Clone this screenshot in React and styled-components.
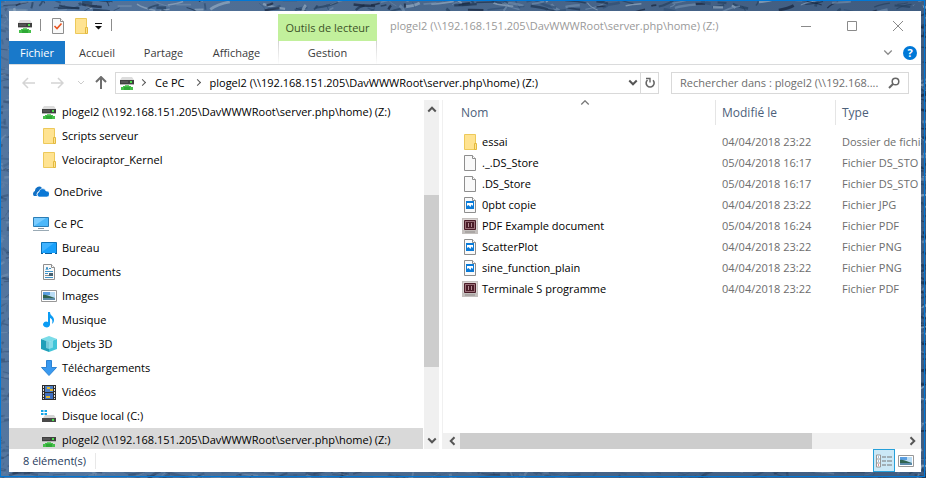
import React from "react";
import styled, { createGlobalStyle } from "styled-components";

const GlobalStyle = createGlobalStyle`
  *, *::before, *::after { box-sizing: border-box; }
  body { margin: 0; font-family: "Open Sans", "Noto Sans", sans-serif; font-size: 11px; line-height: 16px; color: #000; }
  button, input { font: inherit; color: inherit; border: 0; padding: 0; margin: 0; background: none; }
  ul, ol { list-style: none; margin: 0; padding: 0; }
  svg { display: block; flex: none; }
`;

const DRIVE_PATH = "plogel2 (\\\\192.168.151.205\\DavWWWRoot\\server.php\\home) (Z:)";

/* ---------- icons ---------- */

const NetDriveIcon = () => (
  <svg width="16" height="16" viewBox="0 0 16 16">
    <path d="M3 2h10l2 3H1z" fill="#dcdcdc" />
    <path d="M1 5h14v4H1z" fill="#404040" />
    <path d="M1 9h14v1H1z" fill="#b5b5b5" />
    <path d="M2 7h7" stroke="#6a6a6a" />
    <path d="M11 6h2v2h-2z" fill="#4be04b" />
    <path d="M6 10h4v2H6z" fill="#6fd070" />
    <path d="M4 11h8v1H4zM2 12h12v3H2z" fill="#45c04a" />
    <path d="M5 12h6v3H5z" fill="#2fa836" />
  </svg>
);

const FolderIcon = () => (
  <svg width="16" height="16" viewBox="0 0 16 16">
    <path d="M2.5.5h11v15h-11z" fill="#ffe391" stroke="#edc95a" />
    <path d="M12.5 9.5h2v6h-2z" fill="#ffe391" stroke="#e3b93e" />
  </svg>
);

const PageIcon = ({ children }) => (
  <svg width="16" height="16" viewBox="0 0 16 16">
    <path d="M2.5.5h8l3 3v12h-11z" fill="#f9f9f9" stroke="#8e8e8e" />
    <path d="M10.5.5v3h3" fill="#fff" stroke="#8e8e8e" />
    {children}
  </svg>
);

const PictureFileIcon = () => (
  <PageIcon>
    <path d="M4 4h8v8H4z" fill="#0a7bd8" />
    <path d="M5 6h6v3L9.500 7.500 8.500 10 6.500 8 5 9z" fill="#fff" />
  </PageIcon>
);

const PropertiesIcon = () => (
  <PageIcon>
    <path d="M4.500 8l2.500 2.500 4.500-5" fill="none" stroke="#e8531f" strokeWidth="1.6" />
  </PageIcon>
);

const PdfIcon = () => (
  <svg width="16" height="16" viewBox="0 0 16 16">
    <path d="M0 0h16v16H0z" fill="#c4c0be" />
    <path d="M1 1h14v11H1z" fill="#dcd6d4" />
    <path d="M2.500 2.500h11v9h-11z" fill="#9a7078" stroke="#4b1c28" />
    <path d="M4 4h8v6H4z" fill="#4b1c28" />
    <path d="M6.500 5v4M9.500 5v4" stroke="#b08a91" />
    <path d="M3 14h10" stroke="#918d8b" />
  </svg>
);

const CloudIcon = () => (
  <svg width="16" height="16" viewBox="0 0 16 16">
    <path d="M1 12a3 3 0 0 1 1-5 4 4 0 0 1 7-3l-3 3a4 4 0 0 0-2 5z" fill="#1170c5" />
    <path d="M6 13a2.6 2.6 0 0 1 0-5 3.6 3.6 0 0 1 7-1 3 3 0 0 1 1 6z" fill="#0a78d6" stroke="#fff" strokeWidth=".6" />
  </svg>
);

const PcIcon = () => (
  <svg width="16" height="16" viewBox="0 0 16 16">
    <path d="M.5 1.500h15v9H.5z" fill="#4db8fa" stroke="#2b7db5" />
    <path d="M1 10L13 2H1z" fill="#7accff" />
    <path d="M5 12.500h6" stroke="#87959f" />
    <path d="M0 14.500h16" stroke="#9aaab5" />
  </svg>
);

const DesktopIcon = () => (
  <svg width="16" height="16" viewBox="0 0 16 16">
    <path d="M.5 2.500h15v11H.5z" fill="#18a0fb" stroke="#0b72b9" />
    <path d="M1 12L13 3H1z" fill="#40b3ff" />
    <path d="M0 13.500h16" stroke="#0b5e9c" />
    <path d="M2 13.500h2M11 13.500h3" stroke="#fff" />
  </svg>
);

const DocumentsIcon = () => (
  <PageIcon>
    <path d="M5 6l1-3 1 3M8 4.500h2M4 7.500h8M4 9.500h3M4 13.500h8" fill="none" stroke="#3d93c8" />
    <path d="M4 11.500h4" stroke="#8e8e8e" />
    <path d="M8 9h4v3H8z" fill="#46606f" />
  </PageIcon>
);

const ImageIcon = () => (
  <svg width="16" height="16" viewBox="0 0 16 16">
    <path d="M.5 2.500h15v11H.5z" fill="#fff" stroke="#989898" />
    <path d="M2 4h12v8H2z" fill="#b9dcf5" />
    <path d="M2 4h7v3H2z" fill="#5a9ee0" />
    <path d="M2 7c4-1 7 2 12 3H2z" fill="#2f6350" />
    <path d="M2 10h12v2H2z" fill="#5b8aa8" />
  </svg>
);

const MusicIcon = () => (
  <svg width="16" height="16" viewBox="0 0 16 16">
    <path d="M7 0h2c0 4 4 4 4 8 0 2-1 3-2 4 1-4 0-5-2-6v7a3.500 2.800 0 1 1-2-3z" fill="#0c9cf4" />
  </svg>
);

const CubeIcon = () => (
  <svg width="16" height="16" viewBox="0 0 16 16">
    <path d="M0 3l8-3 8 3-8 3z" fill="#7bdce8" />
    <path d="M0 3l8 3v10l-8-3z" fill="#1f9fb9" />
    <path d="M16 3L8 6v10l8-3z" fill="#42c5d8" />
    <path d="M5 5l3 1 4-1.500v7L8 13l-3-1z" fill="#c9f4f9" opacity=".5" />
  </svg>
);

const DownloadIcon = () => (
  <svg width="16" height="16" viewBox="0 0 16 16">
    <path d="M5.500.5h5v7h5L8 15.500.5 7.500h5z" fill="#3a9af0" stroke="#2d83d3" />
  </svg>
);

const VideoIcon = () => (
  <svg width="16" height="16" viewBox="0 0 16 16">
    <path d="M1 1h14v15H1z" fill="#2e2e2e" />
    <path d="M4 2h8v6H4z" fill="#4d7fc4" />
    <path d="M4 9h8v6H4z" fill="#3f6fc0" />
    <path d="M6 3h3v2H6zM9 5h3v2H9zM5 12h4v2H5z" fill="#e0b62f" />
    <path d="M2.500 2v13M13.500 2v13" stroke="#e5e5e5" strokeDasharray="2 1" />
  </svg>
);

const LocalDiskIcon = () => (
  <svg width="16" height="16" viewBox="0 0 16 16">
    <path d="M0 2h2.500v2H0zM3.500 2H6v2H3.500zM0 5h2.500v2H0zM3.500 5H6v2H3.500z" fill="#12a5e8" />
    <path d="M4 7h9l2 3H2z" fill="#d5d5d5" />
    <path d="M1 10h14v4H1z" fill="#494949" />
    <path d="M11 11h2v2h-2z" fill="#4be04b" />
  </svg>
);

const CHEVRONS = {
  up: "M1 6l3-3 3 3",
  down: "M1 2l3 3 3-3",
  left: "M6 1L3 4l3 3",
  right: "M2 1l3 3-3 3",
};
const Chevron = ({ to, size = 8, color = "#555", weight = 1 }) => (
  <svg width={size} height={size} viewBox="0 0 8 8">
    <path d={CHEVRONS[to]} fill="none" stroke={color} strokeWidth={weight} />
  </svg>
);

const Arrow = ({ turn, color, weight = 1.5 }) => (
  <svg width="14" height="14" viewBox="0 0 14 14">
    <path d="M1 7h12M6 2L1 7l5 5" fill="none" stroke={color} strokeWidth={weight} transform={`rotate(${turn} 7 7)`} />
  </svg>
);

const CaptionGlyph = ({ d }) => (
  <svg width="12" height="12" viewBox="0 0 12 12">
    <path d={d} fill="none" stroke="#8a8a8a" />
  </svg>
);

const QuickMenuIcon = () => (
  <svg width="8" height="8" viewBox="0 0 8 8">
    <path d="M0 1h7v1H0zM0 4h7L3.500 7.500z" fill="#111" />
  </svg>
);

const RefreshIcon = () => (
  <svg width="12" height="12" viewBox="0 0 12 12">
    <path d="M9 3.200A4 4 0 1 1 3.500 3" fill="none" stroke="#666" strokeWidth="1.600" />
    <path d="M2 1.500h4v4" fill="none" stroke="#666" strokeWidth="1.400" />
  </svg>
);

const SearchIcon = () => (
  <svg width="12" height="12" viewBox="0 0 12 12">
    <circle cx="7.500" cy="4.500" r="3.300" fill="none" stroke="#666" strokeWidth="1.500" />
    <path d="M5 7l-4 4" stroke="#666" strokeWidth="2" />
  </svg>
);

const DetailsIcon = () => (
  <svg width="16" height="14" viewBox="0 0 16 14">
    <path d="M.5 1h4v12h-4zM.5 5h4M.5 9h4" fill="#fff" stroke="#989898" />
    <path d="M6 3h4M11 3h5M6 7h4M11 7h5M6 11h4M11 11h5" stroke="#777" />
    <path d="M2 3h1M2 7h1" stroke="#3c7ab5" />
    <path d="M2 11h1" stroke="#c22" />
  </svg>
);

/* ---------- desktop ---------- */

const Desktop = styled.div`
  position: relative;
  display: flex;
  height: 100vh;
  min-height: 360px;
  padding: 11px 5px 6px 9px;
  overflow: hidden;
`;

const Wallpaper = styled.svg`
  position: absolute;
  inset: 0;
  width: 100%;
  height: 100%;
`;

const Selection = styled.div`
  position: absolute;
  inset: 0 1px 1px 0;
  border: 1px solid #0078d7;
`;

function branches() {
  let seed = 11;
  const next = () => {
    seed = (seed * 16807) % 2147483647;
    return seed / 2147483647;
  };
  const tones = ["#16243c", "#1d3350", "#6f8cab", "#94abc2", "#24405f", "#2f4f74"];
  return Array.from({ length: 620 }, (_, i) => {
    const side = i % 4;
    const x = side < 2 ? next() * 926 : side === 2 ? next() * 9 : 918 + next() * 8;
    const y = side === 0 ? next() * 11 : side === 1 ? 470 + next() * 8 : next() * 478;
    const dx = next() * 30 - 15;
    const dy = next() * 16 - 8;
    return {
      d: `M${x.toFixed(1)} ${y.toFixed(1)}q${dx.toFixed(1)} ${(dy / 3).toFixed(1)} ${(dx * 1.5).toFixed(1)} ${dy.toFixed(1)}`,
      tone: tones[Math.floor(next() * tones.length)],
      weight: 0.6 + next() * 2.4,
      opacity: side === 2 || side === 1 ? 0.3 : 0.7,
    };
  });
}
const BRANCHES = branches();

const Backdrop = () => (
  <Wallpaper viewBox="0 0 926 478" preserveAspectRatio="none" aria-hidden="true">
    <defs>
      <linearGradient id="sky" x1="0" y1="0" x2="1" y2="0">
        <stop offset="0" stopColor="#54769f" />
        <stop offset=".45" stopColor="#4a688c" />
        <stop offset="1" stopColor="#3f5c80" />
      </linearGradient>
    </defs>
    <path d="M0 0h926v478H0z" fill="url(#sky)" />
    {BRANCHES.map((b) => (
      <path key={b.d} d={b.d} fill="none" stroke={b.tone} strokeWidth={b.weight} opacity={b.opacity} />
    ))}
  </Wallpaper>
);

/* ---------- window frame ---------- */

const Window = styled.main`
  position: relative;
  flex: 1;
  min-width: 0;
  display: flex;
  flex-direction: column;
  background: #fff;
`;

const Top = styled.header`
  display: grid;
  grid-template-columns: 269px 99px 1fr;
  grid-template-rows: 30px 23px;
  border-bottom: 1px solid #dadbdc;
`;

const QuickAccess = styled.div`
  display: flex;
  align-items: center;
  padding-left: 8px;
`;

const Rule = styled.span`
  width: 1px;
  height: 12px;
  background: #8c8c8c;
  margin: 0 7px 2px;
`;

const ToolButton = styled.button`
  display: grid;
  place-items: center;
  height: 22px;
  width: ${(p) => p.$width}px;
`;

const ContextTitle = styled.div`
  margin-top: 3px;
  background: #c2f09c;
  color: #3c5228;
  text-align: center;
  line-height: 27px;
  white-space: nowrap;
`;

const TitleBar = styled.div`
  display: flex;
  align-items: center;
  min-width: 0;
  padding-left: 13px;
`;

const Title = styled.h1`
  flex: 1;
  min-width: 0;
  margin: 0;
  font-size: 11px;
  font-weight: 400;
  color: #999;
  white-space: nowrap;
  overflow: hidden;
  text-overflow: ellipsis;
`;

const CaptionButton = styled.button`
  display: grid;
  place-items: center;
  width: 46px;
  height: 28px;
`;

const RibbonTabs = styled.div`
  display: flex;
`;

const Tab = styled.button`
  width: ${(p) => p.$width}px;
  text-align: center;
  color: ${(p) => (p.$file ? "#fff" : "#3b3b3b")};
  background: ${(p) => (p.$file ? "#1979ca" : "transparent")};
`;

const ContextTab = styled.button`
  color: #3b3b3b;
  border: solid transparent;
  border-width: 0 1px;
  border-image: linear-gradient(#d0d0d0, #ffffff) 1;
`;

const RibbonEnd = styled.div`
  display: flex;
  align-items: center;
  justify-content: flex-end;
  gap: 7px;
  padding-right: 4px;
`;

const HelpButton = styled.button`
  width: 14px;
  height: 14px;
  border-radius: 50%;
  background: #0078d7;
  color: #fff;
  font-weight: 700;
  line-height: 14px;
`;

/* ---------- address row ---------- */

const AddressRow = styled.nav`
  display: flex;
  align-items: center;
  height: 35px;
  padding: 0 12px 0 10px;
`;

const NavButton = styled(ToolButton)`
  height: 20px;
`;

const AddressBox = styled.div`
  flex: 1;
  min-width: 0;
  display: flex;
  align-items: center;
  height: 22px;
  border: 1px solid #d9d9d9;
  padding-left: 3px;
  margin-right: 12px;
`;

const Crumbs = styled.ol`
  flex: 1;
  min-width: 0;
  overflow: hidden;
  display: flex;
  align-items: center;
  gap: 5px;
  white-space: nowrap;
`;

const Crumb = styled.li`
  display: flex;
  align-items: center;
  &::before {
    content: "";
    width: 5px;
    height: 5px;
    margin: 0 10px 0 5px;
    border: solid #555;
    border-width: 1px 1px 0 0;
    transform: rotate(45deg);
  }
`;

const RefreshButton = styled(NavButton)`
  border-left: 1px solid #d9d9d9;
`;

const SearchBox = styled.label`
  display: flex;
  align-items: center;
  width: 238px;
  height: 22px;
  border: 1px solid #d9d9d9;
  padding: 0 8px;
`;

const SearchInput = styled.input`
  flex: 1;
  min-width: 0;
  outline: 0;
  &::placeholder {
    color: #6d6d6d;
    opacity: 1;
  }
`;

/* ---------- body ---------- */

const Body = styled.div`
  flex: 1;
  min-height: 0;
  display: grid;
  grid-template-columns: 415px 15px 1fr;
`;

const Tree = styled.ul`
  overflow: hidden;
  padding-right: 1px;
`;

const TreeItem = styled.li`
  padding: ${(p) => (p.$root ? "8px 0 0" : "0")};
`;

const TreeButton = styled.button`
  display: flex;
  align-items: center;
  gap: 5px;
  width: 100%;
  height: 24px;
  padding-left: ${(p) => (p.$root ? 24 : 32)}px;
  white-space: nowrap;
  background: ${(p) => (p.$selected ? "#d9d9d9" : "transparent")};
`;

const Scrollbar = styled.div`
  display: flex;
  flex-direction: ${(p) => (p.$across ? "row" : "column")};
  background: #f0f0f0;
  ${(p) => (p.$across ? "height: 16px;" : "width: 15px;")}
`;

const ScrollButton = styled.button`
  display: grid;
  place-items: center;
  flex: 0 0 17px;
`;

const Track = styled.div`
  display: flex;
  flex-direction: inherit;
  flex: 1;
`;

const Thumb = styled.span`
  flex: ${(p) => p.$share} 0 0;
  background: #cdcdcd;
`;

const Space = styled.span`
  flex: ${(p) => p.$share} 0 0;
`;

const Content = styled.section`
  min-width: 0;
  display: flex;
  flex-direction: column;
  margin-left: 3px;
  border-left: 1px solid #f0f0f0;
`;

const FilePane = styled.div`
  flex: 1;
  min-height: 0;
  overflow: hidden;
  padding-left: 12px;
`;

const FileTable = styled.table`
  width: 100%;
  table-layout: fixed;
  border-collapse: separate;
  border-spacing: 0;
`;

const HeadCell = styled.th`
  width: ${(p) => p.$width};
  height: 25px;
  padding: 0;
  font-size: 12px;
  font-weight: 400;
  text-align: left;
  border-right: ${(p) => (p.$width ? "1px solid #e5e5e5" : "0")};
`;

const SortButton = styled.button`
  position: relative;
  width: 100%;
  height: 25px;
  padding-left: 6px;
  text-align: left;
  color: #4c607a;
`;

const SortMark = styled.span`
  position: absolute;
  top: -3px;
  left: 0;
  right: 0;
  display: grid;
  place-items: center;
`;

const FileRow = styled.tr`
  height: 21px;
`;

const Cell = styled.td`
  padding: 0 0 0 6px;
  color: #6d6d6d;
  white-space: nowrap;
`;

const NameCell = styled.td`
  padding: 0 0 0 7px;
  white-space: nowrap;
`;

const FileName = styled.span`
  display: flex;
  align-items: center;
  gap: 4px;
`;

const HeadGap = styled.tr`
  height: 6px;
`;

const EmptyCell = styled.td`
  padding: 0;
`;

const StatusBar = styled.footer`
  display: flex;
  height: 23px;
  padding-left: 14px;
  color: #1e395b;
`;

const Count = styled.span`
  align-self: center;
  padding-right: 9px;
  border-right: 1px solid #e8e8e8;
  margin-right: auto;
`;

const ViewButton = styled.button`
  display: grid;
  place-items: center;
  width: 22px;
  height: 23px;
  border: 1px solid ${(p) => (p.$on ? "#26a0da" : "transparent")};
  background: ${(p) => (p.$on ? "#cbe8f6" : "transparent")};
`;

const Views = styled.div`
  display: flex;
  padding-right: 4px;
`;

/* ---------- data ---------- */

const TREE = [
  { label: DRIVE_PATH, Icon: NetDriveIcon },
  { label: "Scripts serveur", Icon: FolderIcon },
  { label: "Velociraptor_Kernel", Icon: FolderIcon },
  { label: "OneDrive", Icon: CloudIcon, root: true },
  { label: "Ce PC", Icon: PcIcon, root: true },
  { label: "Bureau", Icon: DesktopIcon },
  { label: "Documents", Icon: DocumentsIcon },
  { label: "Images", Icon: ImageIcon },
  { label: "Musique", Icon: MusicIcon },
  { label: "Objets 3D", Icon: CubeIcon },
  { label: "Téléchargements", Icon: DownloadIcon },
  { label: "Vidéos", Icon: VideoIcon },
  { label: "Disque local (C:)", Icon: LocalDiskIcon },
  { label: DRIVE_PATH, Icon: NetDriveIcon, selected: true },
];

const FILES = [
  ["essai", FolderIcon, "04/04/2018 23:22", "Dossier de fichi"],
  ["._.DS_Store", PageIcon, "05/04/2018 16:17", "Fichier DS_STO"],
  [".DS_Store", PageIcon, "05/04/2018 16:17", "Fichier DS_STO"],
  ["0pbt copie", PictureFileIcon, "04/04/2018 23:22", "Fichier JPG"],
  ["PDF Example document", PdfIcon, "05/04/2018 16:24", "Fichier PDF"],
  ["ScatterPlot", PictureFileIcon, "04/04/2018 23:22", "Fichier PNG"],
  ["sine_function_plain", PictureFileIcon, "04/04/2018 23:22", "Fichier PNG"],
  ["Terminale S programme", PdfIcon, "04/04/2018 23:22", "Fichier PDF"],
];

function ScrollControl({ across, before, thumb, after }) {
  return (
    <Scrollbar $across={across}>
      <ScrollButton aria-label={across ? "Gauche" : "Haut"}>
        <Chevron to={across ? "left" : "up"} size={10} weight={1.6} />
      </ScrollButton>
      <Track>
        <Space $share={before} />
        <Thumb $share={thumb} />
        <Space $share={after} />
      </Track>
      <ScrollButton aria-label={across ? "Droite" : "Bas"}>
        <Chevron to={across ? "right" : "down"} size={10} weight={1.6} />
      </ScrollButton>
    </Scrollbar>
  );
}

export default function App() {
  return (
    <Desktop>
      <GlobalStyle />
      <Backdrop />
      <Selection />
      <Window>
        <Top>
          <QuickAccess>
            <NetDriveIcon />
            <Rule />
            <ToolButton $width={20} aria-label="Propriétés"><PropertiesIcon /></ToolButton>
            <ToolButton $width={26} aria-label="Nouveau dossier"><FolderIcon /></ToolButton>
            <ToolButton $width={10} aria-label="Personnaliser"><QuickMenuIcon /></ToolButton>
            <Rule />
          </QuickAccess>
          <ContextTitle>Outils de lecteur</ContextTitle>
          <TitleBar>
            <Title>{DRIVE_PATH}</Title>
            <CaptionButton aria-label="Réduire"><CaptionGlyph d="M1 6.500h10" /></CaptionButton>
            <CaptionButton aria-label="Agrandir"><CaptionGlyph d="M1.500 1.500h9v9h-9z" /></CaptionButton>
            <CaptionButton aria-label="Fermer"><CaptionGlyph d="M1 1l10 10M11 1L1 11" /></CaptionButton>
          </TitleBar>
          <RibbonTabs>
            <Tab $file $width={56}>Fichier</Tab>
            <Tab $width={64}>Accueil</Tab>
            <Tab $width={69}>Partage</Tab>
            <Tab $width={77}>Affichage</Tab>
          </RibbonTabs>
          <ContextTab>Gestion</ContextTab>
          <RibbonEnd>
            <ToolButton $width={16} aria-label="Développer le ruban"><Chevron to="down" size={10} color="#8a8a8a" /></ToolButton>
            <HelpButton aria-label="Aide">?</HelpButton>
          </RibbonEnd>
        </Top>

        <AddressRow>
          <NavButton $width={20} aria-label="Précédent"><Arrow turn={0} color="#d4d4d4" /></NavButton>
          <NavButton $width={36} aria-label="Suivant"><Arrow turn={180} color="#d4d4d4" /></NavButton>
          <NavButton $width={12} aria-label="Emplacements récents"><Chevron to="down" color="#ccc" /></NavButton>
          <NavButton $width={28} aria-label="Dossier parent"><Arrow turn={90} color="#6e6e6e" weight={2} /></NavButton>
          <AddressBox>
            <NetDriveIcon />
            <Crumbs>
              <Crumb><button>Ce PC</button></Crumb>
              <Crumb><button>{DRIVE_PATH}</button></Crumb>
            </Crumbs>
            <NavButton $width={14} aria-label="Adresses précédentes"><Chevron to="down" size={10} weight={1.6} /></NavButton>
            <RefreshButton $width={18} aria-label="Actualiser"><RefreshIcon /></RefreshButton>
          </AddressBox>
          <SearchBox>
            <SearchInput aria-label="Rechercher" placeholder={"Rechercher dans : plogel2 (\\\\192.168...."} />
            <SearchIcon />
          </SearchBox>
        </AddressRow>

        <Body>
          <Tree>
            {TREE.map(({ label, Icon, root, selected }, i) => (
              <TreeItem key={i} $root={root}>
                <TreeButton $root={root} $selected={selected}><Icon />{label}</TreeButton>
              </TreeItem>
            ))}
          </Tree>
          <ScrollControl before={78} thumb={172} after={65} />
          <Content>
            <FilePane>
              <FileTable>
                <thead>
                  <tr>
                    <HeadCell $width="261px">
                      <SortButton>Nom<SortMark><Chevron to="up" size={10} color="#777" /></SortMark></SortButton>
                    </HeadCell>
                    <HeadCell $width="120px"><SortButton>Modifié le</SortButton></HeadCell>
                    <HeadCell><SortButton>Type</SortButton></HeadCell>
                  </tr>
                </thead>
                <tbody>
                  <HeadGap><EmptyCell colSpan={3} /></HeadGap>
                  {FILES.map(([name, Icon, date, type]) => (
                    <FileRow key={name}>
                      <NameCell><FileName><Icon />{name}</FileName></NameCell>
                      <Cell>{date}</Cell>
                      <Cell>{type}</Cell>
                    </FileRow>
                  ))}
                </tbody>
              </FileTable>
            </FilePane>
            <ScrollControl across before={0} thumb={351} after={92} />
          </Content>
        </Body>

        <StatusBar>
          <Count>8 élément(s)</Count>
          <Views>
            <ViewButton $on aria-label="Détails"><DetailsIcon /></ViewButton>
            <ViewButton aria-label="Grandes icônes"><ImageIcon /></ViewButton>
          </Views>
        </StatusBar>
      </Window>
    </Desktop>
  );
}
